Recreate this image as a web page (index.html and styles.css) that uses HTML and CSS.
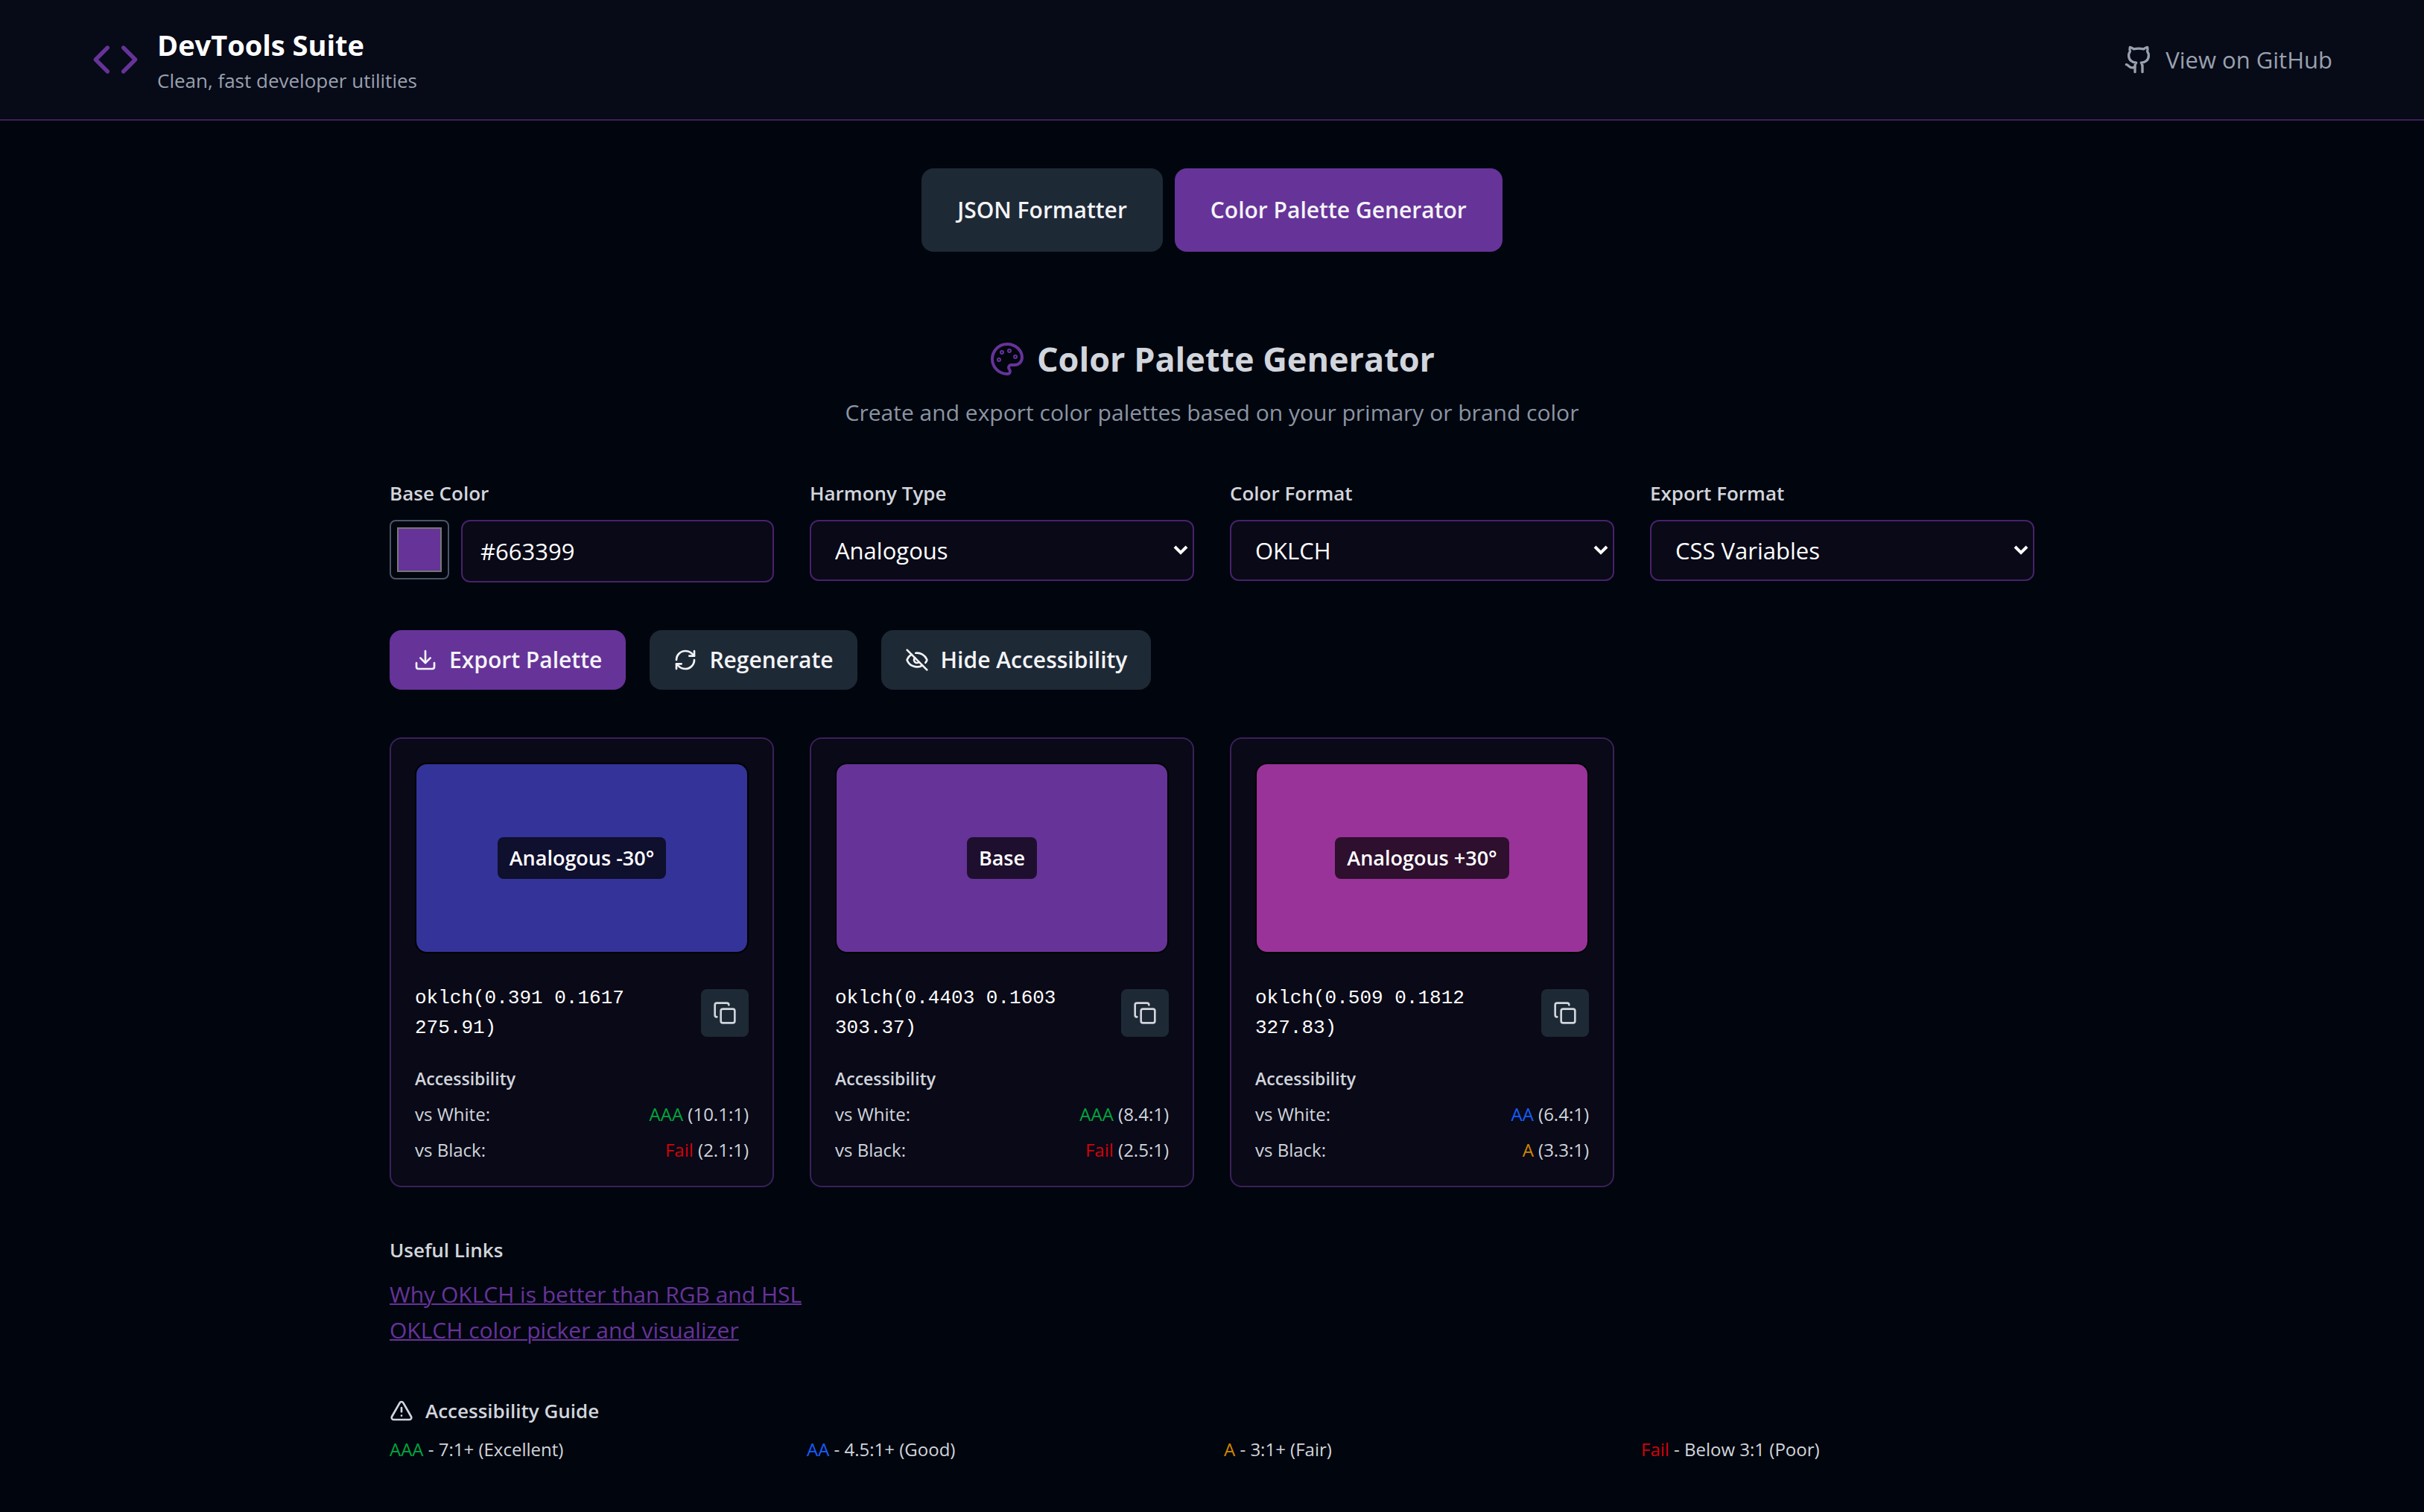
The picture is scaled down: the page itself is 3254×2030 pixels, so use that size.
FILE: index.html
```html
<!DOCTYPE html>
<html lang="en">
<head>
  <meta charset="utf-8">
  <title>DevTools Suite</title>
  <link rel="stylesheet" href="styles.css">
</head>
<body>
  <svg class="sprite" aria-hidden="true">
    <symbol id="icon-copy" viewBox="0 0 24 24">
      <rect x="8" y="8" width="14" height="14" rx="2"/>
      <path d="M4 16c-1.1 0-2-.9-2-2V4c0-1.1.9-2 2-2h10c1.1 0 2 .9 2 2"/>
    </symbol>
  </svg>

  <header class="site-header">
    <div class="header-inner">
      <div class="brand">
        <svg class="icon icon-xl accent" viewBox="0 0 24 24"><path d="m16 18 6-6-6-6"/><path d="m8 6-6 6 6 6"/></svg>
        <div>
          <h1 class="brand-title">DevTools Suite</h1>
          <p class="brand-tagline">Clean, fast developer utilities</p>
        </div>
      </div>
      <a class="github-link" href="#github">
        <svg class="icon icon-md" viewBox="0 0 24 24"><path d="M15 22v-4a4.8 4.8 0 0 0-1-3.5c3 0 6-2 6-5.5.08-1.25-.27-2.48-1-3.5.28-1.15.28-2.35 0-3.5 0 0-1 0-3 1.5-2.64-.5-5.36-.5-8 0C6 2 5 2 5 2c-.3 1.15-.3 2.35 0 3.5A5.403 5.403 0 0 0 4 9c0 3.5 3 5.5 6 5.5-.39.49-.68 1.05-.85 1.65-.17.6-.22 1.23-.15 1.85v4"/><path d="M9 18c-4.51 2-5-2-7-2"/></svg>
        View on GitHub
      </a>
    </div>
  </header>

  <nav class="tool-tabs">
    <button class="tab" type="button">JSON Formatter</button>
    <button class="tab active" type="button">Color Palette Generator</button>
  </nav>

  <main class="content">
    <div class="intro">
      <h2 class="intro-title">
        <svg class="icon icon-lg accent" viewBox="0 0 24 24"><path d="M12 22a1 1 0 0 1 0-20 10 9 0 0 1 10 9 5 5 0 0 1-5 5h-2.250a1.750 1.750 0 0 0-1.400 2.800l.3.400a1.750 1.750 0 0 1-1.400 2.800z"/><circle cx="13.500" cy="6.500" r=".5"/><circle cx="17.500" cy="10.500" r=".5"/><circle cx="6.500" cy="12.500" r=".5"/><circle cx="8.500" cy="7.500" r=".5"/></svg>
        Color Palette Generator
      </h2>
      <p class="intro-text">Create and export color palettes based on your primary or brand color</p>
    </div>

    <form class="controls">
      <div class="field">
        <label class="field-label" for="base-color">Base Color</label>
        <div class="color-row">
          <input class="color-swatch" type="color" value="#663399" aria-label="Pick base color">
          <input class="text-input" id="base-color" type="text" value="#663399">
        </div>
      </div>
      <div class="field">
        <label class="field-label" for="harmony">Harmony Type</label>
        <div class="select-wrap">
          <select class="select" id="harmony"><option>Analogous</option></select>
          <svg class="chevron" viewBox="0 0 20 14"><path d="m2 2 8 8 8-8"/></svg>
        </div>
      </div>
      <div class="field">
        <label class="field-label" for="color-format">Color Format</label>
        <div class="select-wrap">
          <select class="select" id="color-format"><option>OKLCH</option></select>
          <svg class="chevron" viewBox="0 0 20 14"><path d="m2 2 8 8 8-8"/></svg>
        </div>
      </div>
      <div class="field">
        <label class="field-label" for="export-format">Export Format</label>
        <div class="select-wrap">
          <select class="select" id="export-format"><option>CSS Variables</option></select>
          <svg class="chevron" viewBox="0 0 20 14"><path d="m2 2 8 8 8-8"/></svg>
        </div>
      </div>
    </form>

    <div class="actions">
      <button class="action primary" type="button">
        <svg class="icon icon-sm" viewBox="0 0 24 24"><path d="M12 15V3"/><path d="M21 15v4a2 2 0 0 1-2 2H5a2 2 0 0 1-2-2v-4"/><path d="m7 10 5 5 5-5"/></svg>
        Export Palette
      </button>
      <button class="action" type="button">
        <svg class="icon icon-sm" viewBox="0 0 24 24"><path d="M3 12a9 9 0 0 1 9-9 9.750 9.750 0 0 1 6.740 2.740L21 8"/><path d="M21 3v5h-5"/><path d="M21 12a9 9 0 0 1-9 9 9.750 9.750 0 0 1-6.740-2.740L3 16"/><path d="M8 16H3v5"/></svg>
        Regenerate
      </button>
      <button class="action" type="button">
        <svg class="icon icon-sm" viewBox="0 0 24 24"><path d="M10.733 5.076a10.744 10.744 0 0 1 11.205 6.575 1 1 0 0 1 0 .696 10.747 10.747 0 0 1-1.444 2.490"/><path d="M14.084 14.158a3 3 0 0 1-4.242-4.242"/><path d="M17.479 17.499a10.750 10.750 0 0 1-15.417-5.151 1 1 0 0 1 0-.696 10.750 10.750 0 0 1 4.446-5.143"/><path d="m2 2 20 20"/></svg>
        Hide Accessibility
      </button>
    </div>

    <section class="palette">
      <article class="card">
        <div class="swatch analogous-minus"><span class="swatch-name">Analogous -30°</span></div>
        <div class="value-row">
          <code class="value">oklch(0.391 0.1617 275.91)</code>
          <button class="copy" type="button" aria-label="Copy"><svg class="icon icon-sm"><use href="#icon-copy"/></svg></button>
        </div>
        <div class="contrast">
          <h3 class="contrast-title">Accessibility</h3>
          <p class="contrast-row"><span>vs White:</span><span><span class="aaa">AAA</span> (10.1:1)</span></p>
          <p class="contrast-row"><span>vs Black:</span><span><span class="fail">Fail</span> (2.1:1)</span></p>
        </div>
      </article>
      <article class="card">
        <div class="swatch base"><span class="swatch-name">Base</span></div>
        <div class="value-row">
          <code class="value">oklch(0.4403 0.1603 303.37)</code>
          <button class="copy" type="button" aria-label="Copy"><svg class="icon icon-sm"><use href="#icon-copy"/></svg></button>
        </div>
        <div class="contrast">
          <h3 class="contrast-title">Accessibility</h3>
          <p class="contrast-row"><span>vs White:</span><span><span class="aaa">AAA</span> (8.4:1)</span></p>
          <p class="contrast-row"><span>vs Black:</span><span><span class="fail">Fail</span> (2.5:1)</span></p>
        </div>
      </article>
      <article class="card">
        <div class="swatch analogous-plus"><span class="swatch-name">Analogous +30°</span></div>
        <div class="value-row">
          <code class="value">oklch(0.509 0.1812 327.83)</code>
          <button class="copy" type="button" aria-label="Copy"><svg class="icon icon-sm"><use href="#icon-copy"/></svg></button>
        </div>
        <div class="contrast">
          <h3 class="contrast-title">Accessibility</h3>
          <p class="contrast-row"><span>vs White:</span><span><span class="aa">AA</span> (6.4:1)</span></p>
          <p class="contrast-row"><span>vs Black:</span><span><span class="a">A</span> (3.3:1)</span></p>
        </div>
      </article>
    </section>

    <section class="links">
      <h3 class="section-title">Useful Links</h3>
      <ul class="link-list">
        <li><a class="link" href="#why-oklch">Why OKLCH is better than RGB and HSL</a></li>
        <li><a class="link" href="#oklch-picker">OKLCH color picker and visualizer</a></li>
      </ul>
    </section>

    <section class="guide">
      <h3 class="section-title">
        <svg class="icon icon-sm" viewBox="0 0 24 24"><path d="m21.730 18-8-14a2 2 0 0 0-3.480 0l-8 14A2 2 0 0 0 4 21h16a2 2 0 0 0 1.730-3"/><path d="M12 9v4"/><path d="M12 17h.01"/></svg>
        Accessibility Guide
      </h3>
      <div class="guide-grid">
        <p><span class="aaa">AAA</span> - 7:1+ (Excellent)</p>
        <p><span class="aa">AA</span> - 4.5:1+ (Good)</p>
        <p><span class="a">A</span> - 3:1+ (Fair)</p>
        <p><span class="fail">Fail</span> - Below 3:1 (Poor)</p>
      </div>
    </section>
  </main>
</body>
</html>
```
FILE: styles.css
```css
:root {
  --bg: #01050e;
  --header-bg: #070a17;
  --surface: #090917;
  --purple: #663399;
  --purple-line: #47226b;
  --purple-line-soft: #3c2059;
  --slate: #1e2936;
  --text: #d1d5dc;
  --muted: #99a1af;
  --fs-xs: 24px;
  --fs-sm: 26px;
  --fs-md: 30px;
  --fs-control: 31px;
  --fs-lg: 38px;
  --fs-xl: 45px;
}

*,
*::before,
*::after {
  box-sizing: border-box;
  margin: 0;
  padding: 0;
}

body {
  background: var(--bg);
  color: var(--text);
  font-family: "Open Sans", "Noto Sans", sans-serif;
  font-size: var(--fs-md);
  line-height: 48px;
}

button,
input,
select {
  font: inherit;
  color: inherit;
}

button {
  border: 0;
  cursor: pointer;
}

.sprite {
  display: none;
}

.icon {
  flex: none;
  fill: none;
  stroke: currentColor;
  stroke-width: 2;
  stroke-linecap: round;
  stroke-linejoin: round;
}

.icon-sm { width: 32px; height: 32px; }
.icon-md { width: 40px; height: 40px; }
.icon-lg { width: 48px; height: 48px; }
.icon-xl { width: 64px; height: 64px; }

.accent { color: var(--purple); }

/* Header */

.site-header {
  background: var(--header-bg);
  border-bottom: 2px solid var(--purple-line-soft);
}

.header-inner {
  display: flex;
  align-items: center;
  justify-content: space-between;
  max-width: 3072px;
  margin: 0 auto;
  padding: 32px;
}

.brand {
  display: flex;
  align-items: center;
  gap: 24px;
}

.brand-title {
  color: #fff;
  font-size: var(--fs-lg);
  font-weight: 700;
  line-height: 56px;
}

.brand-tagline {
  color: var(--muted);
  font-size: var(--fs-sm);
  line-height: 40px;
}

.github-link {
  display: flex;
  align-items: center;
  gap: 16px;
  color: var(--muted);
  font-size: var(--fs-control);
  text-decoration: none;
}

/* Tool tabs */

.tool-tabs {
  display: flex;
  justify-content: center;
  gap: 16px;
  padding: 64px 32px 0;
}

.tab {
  padding: 32px 48px;
  border-radius: 16px;
  background: var(--slate);
  color: #f3f4f6;
  font-weight: 600;
}

.tab.active {
  background: var(--purple);
}

/* Generator */

.content {
  display: flex;
  flex-direction: column;
  gap: 64px;
  max-width: 2304px;
  margin: 0 auto;
  padding: 112px 48px 64px;
}

.intro {
  display: flex;
  flex-direction: column;
  align-items: center;
  gap: 16px;
  text-align: center;
}

.intro-title {
  display: flex;
  align-items: center;
  gap: 16px;
  font-size: var(--fs-xl);
  font-weight: 700;
  line-height: 64px;
}

.intro-text {
  color: #8b95a3;
}

.controls {
  display: grid;
  grid-template-columns: repeat(4, 1fr);
  gap: 48px;
}

.field-label {
  display: block;
  margin-bottom: 16px;
  font-size: var(--fs-sm);
  font-weight: 600;
  line-height: 40px;
}

.color-row {
  display: flex;
  gap: 16px;
}

.color-swatch {
  flex: none;
  width: 80px;
  height: 80px;
  padding: 8px;
  border: 2px solid #4a5565;
  border-radius: 8px;
  background: transparent;
  appearance: none;
}

.color-swatch::-webkit-color-swatch-wrapper {
  padding: 0;
}

.color-swatch::-webkit-color-swatch {
  border: 2px solid #777;
  border-radius: 0;
}

.text-input,
.select {
  width: 100%;
  min-width: 0;
  border: 2px solid var(--purple-line);
  border-radius: 12px;
  background: var(--surface);
  color: #fff;
  font-size: var(--fs-control);
}

.text-input {
  height: 84px;
  padding: 0 24px;
}

.select-wrap {
  display: grid;
  align-items: center;
}

.select-wrap > * {
  grid-area: 1 / 1;
}

.select {
  height: 82px;
  padding: 0 32px;
  appearance: none;
}

.chevron {
  justify-self: end;
  width: 20px;
  height: 14px;
  margin-right: 8px;
  fill: none;
  stroke: #fff;
  stroke-width: 4;
  pointer-events: none;
}

.actions {
  display: flex;
  flex-wrap: wrap;
  gap: 32px;
}

.action {
  display: flex;
  align-items: center;
  gap: 16px;
  padding: 16px 32px;
  border-radius: 16px;
  background: var(--slate);
  color: #f3f4f6;
  font-weight: 600;
}

.action.primary {
  background: var(--purple);
}

/* Palette cards */

.palette {
  display: grid;
  grid-template-columns: repeat(4, 1fr);
  gap: 48px;
}

.card {
  padding: 32px;
  border: 2px solid var(--purple-line-soft);
  border-radius: 16px;
  background: var(--surface);
}

.swatch {
  display: flex;
  align-items: center;
  justify-content: center;
  height: 256px;
  border: 2px solid #000;
  border-radius: 16px;
}

.analogous-minus { background: #333399; }
.base { background: #663399; }
.analogous-plus { background: #993399; }

.swatch-name {
  padding: 8px 16px;
  border-radius: 8px;
  background: rgba(0, 0, 0, 0.7);
  color: #fff;
  font-size: 27px;
  font-weight: 600;
  line-height: 40px;
}

.value-row {
  display: flex;
  align-items: center;
  justify-content: space-between;
  gap: 16px;
  margin-top: 40px;
}

.value {
  color: #fff;
  font-family: "Liberation Mono", monospace;
  font-size: var(--fs-sm);
  line-height: 40px;
}

.copy {
  display: flex;
  flex: none;
  padding: 16px;
  border-radius: 8px;
  background: var(--slate);
}

.contrast {
  display: flex;
  flex-direction: column;
  gap: 16px;
  margin-top: 32px;
  font-size: var(--fs-xs);
  line-height: 32px;
}

.contrast-title {
  font-size: 23px;
  font-weight: 600;
}

.contrast-row {
  display: flex;
  justify-content: space-between;
}

.aaa { color: #00a63e; }
.aa { color: #155dfc; }
.a { color: #d08700; }
.fail { color: #d4000b; }

/* Links and guide */

.section-title {
  display: flex;
  align-items: center;
  gap: 16px;
  margin-bottom: 16px;
  font-size: var(--fs-sm);
  font-weight: 600;
  line-height: 40px;
}

.link-list {
  list-style: none;
}

.link {
  color: var(--purple);
  text-decoration-thickness: 2px;
}

.guide-grid {
  display: grid;
  grid-template-columns: repeat(4, 1fr);
  gap: 32px;
  font-size: var(--fs-xs);
  line-height: 32px;
}
```
